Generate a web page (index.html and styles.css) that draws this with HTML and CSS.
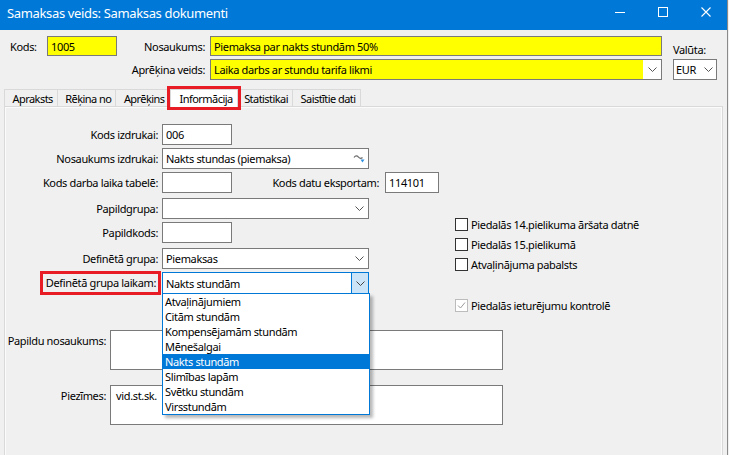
FILE: index.html
```html
<!DOCTYPE html>
<html lang="lv">
<head>
<meta charset="utf-8">
<title>Samaksas veids</title>
<link rel="stylesheet" href="styles.css">
</head>
<body>
<div class="window">
  <div class="titlebar">
    <span class="title">Samaksas veids: Samaksas dokumenti</span>
    <div class="ctrls">
      <span class="cbtn"><svg width="10" height="10" viewBox="0 0 10 10"><path d="M0 5.5H10" stroke="#fff" stroke-width="1"/></svg></span>
      <span class="cbtn"><svg width="10" height="10" viewBox="0 0 10 10"><rect x="0.5" y="0.5" width="9" height="9" fill="none" stroke="#fff" stroke-width="1"/></svg></span>
      <span class="cbtn"><svg width="10" height="10" viewBox="0 0 10 10"><path d="M0.5 0.5L9.5 9.5M9.5 0.5L0.5 9.5" stroke="#fff" stroke-width="1.1"/></svg></span>
    </div>
  </div>

  <div class="hdr">
    <span class="hlbl kods">Kods:</span>
    <div class="field yellow w-kods">1005</div>
    <span class="hlbl right">Nosaukums:</span>
    <div class="field yellow">Piemaksa par nakts stundām 50%</div>
    <span class="hlbl valuta">Valūta:</span>

    <span class="hlbl right r2">Aprēķina veids:</span>
    <div class="field combo r2">
      <span class="cval yellow">Laika darbs ar stundu tarifa likmi</span>
      <span class="carrow"><svg width="9" height="5" viewBox="0 0 9 5"><polyline points="0.5,0.5 4.5,4.5 8.5,0.5" fill="none" stroke="#555" stroke-width="1"/></svg></span>
    </div>
    <div class="field combo r2 eur">
      <span class="cval">EUR</span>
      <span class="carrow"><svg width="9" height="5" viewBox="0 0 9 5"><polyline points="0.5,0.5 4.5,4.5 8.5,0.5" fill="none" stroke="#555" stroke-width="1"/></svg></span>
    </div>
  </div>

  <div class="tabs">
    <span class="tab">Apraksts</span>
    <span class="tab">Rēķina no</span>
    <span class="tab">Aprēķins</span>
    <span class="tab active">Informācija</span>
    <span class="tab">Statistikai</span>
    <span class="tab">Saistītie dati</span>
  </div>

  <div class="panel">
    <div class="form-top">
      <div class="fields">
        <div class="row">
          <span class="lbl">Kods izdrukai:</span>
          <div class="field w-short">006</div>
        </div>
        <div class="row">
          <span class="lbl">Nosaukums izdrukai:</span>
          <div class="field w-long combo">
            <span class="cval">Nakts stundas (piemaksa)</span>
            <span class="carrow trans"><svg width="12" height="9" viewBox="0 0 12 9"><path d="M1 3.5C2.5 1.5 4 1.5 5.5 3.2S8.5 4.5 9.5 3.5" fill="none" stroke="#6b6b6b" stroke-width="1.2"/><path d="M7.5 5.5H11.5L9.5 8.5Z" fill="#2d8fe0"/></svg></span>
          </div>
        </div>
        <div class="row gap">
          <span class="lbl">Kods darba laika tabelē:</span>
          <div class="field w-short"></div>
          <span class="lbl2">Kods datu eksportam:</span>
          <div class="field w-exp">114101</div>
        </div>
        <div class="row">
          <span class="lbl">Papildgrupa:</span>
          <div class="field w-long combo">
            <span class="cval"></span>
            <span class="carrow trans"><svg width="9" height="5" viewBox="0 0 9 5"><polyline points="0.5,0.5 4.5,4.5 8.5,0.5" fill="none" stroke="#555" stroke-width="1"/></svg></span>
          </div>
        </div>
        <div class="row gap">
          <span class="lbl">Papildkods:</span>
          <div class="field w-short"></div>
        </div>
        <div class="row">
          <span class="lbl">Definētā grupa:</span>
          <div class="field w-long combo">
            <span class="cval">Piemaksas</span>
            <span class="carrow trans"><svg width="9" height="5" viewBox="0 0 9 5"><polyline points="0.5,0.5 4.5,4.5 8.5,0.5" fill="none" stroke="#555" stroke-width="1"/></svg></span>
          </div>
        </div>
        <div class="row open">
          <span class="lbl"><span class="mark">Definētā grupa laikam:</span></span>
          <div class="field w-long combo focus">
            <span class="cval">Nakts stundām</span>
            <span class="carrow pressed"><svg width="9" height="5" viewBox="0 0 9 5"><polyline points="0.5,0.5 4.5,4.5 8.5,0.5" fill="none" stroke="#444" stroke-width="1"/></svg></span>
          </div>
          <ul class="dropdown">
            <li>Atvaļinājumiem</li>
            <li>Citām stundām</li>
            <li>Kompensējamām stundām</li>
            <li>Mēnešalgai</li>
            <li class="sel">Nakts stundām</li>
            <li>Slimības lapām</li>
            <li>Svētku stundām</li>
            <li>Virsstundām</li>
          </ul>
        </div>
      </div>
      <div class="checks">
        <label class="chk"><span class="box"></span>Piedalās 14.pielikuma āršata datnē</label>
        <label class="chk"><span class="box"></span>Piedalās 15.pielikumā</label>
        <label class="chk"><span class="box"></span>Atvaļinājuma pabalsts</label>
        <label class="chk last"><span class="box dis"><svg width="11" height="11" viewBox="0 0 11 11"><polyline points="2,5.5 4.5,8 9,2.5" fill="none" stroke="#9a9a9a" stroke-width="1"/></svg></span>Piedalās ieturējumu kontrolē</label>
      </div>
    </div>

    <div class="trow">
      <span class="tlbl">Papildu nosaukums:</span>
      <div class="tarea"></div>
    </div>
    <div class="trow">
      <span class="tlbl">Piezīmes:</span>
      <div class="tarea">vid.st.sk.</div>
    </div>
  </div>
</div>
</body>
</html>
```
FILE: styles.css
```css
* { box-sizing: border-box; }
html, body { margin: 0; padding: 0; }
body {
  width: 729px;
  height: 455px;
  overflow: hidden;
  background: #f0f0f0;
  font-family: "Noto Sans", "Open Sans", sans-serif;
  font-size: 11px;
  letter-spacing: -0.35px;
  color: #000;
}
.window {
  width: 728px;
  height: 455px;
  border-right: 1px solid #8a8a8a;
  overflow: hidden;
}
.titlebar {
  height: 30px;
  background: #0078d7;
  color: #fff;
  display: flex;
  align-items: center;
  padding-left: 7px;
}
.title { flex: 1; font-size: 13px; letter-spacing: -0.35px; padding-bottom: 5px; }
.ctrls { display: flex; align-self: stretch; }
.cbtn {
  width: 43px;
  display: flex;
  align-items: center;
  justify-content: center;
  padding-bottom: 6px;
}

/* header */
.hdr {
  display: grid;
  grid-template-columns: 47px 70px 93px 452px 11px 44px;
  grid-template-rows: 20px 21px;
  row-gap: 3px;
  margin-top: 6px;
}
.hlbl { display: flex; align-items: center; white-space: nowrap; }
.hlbl.kods { padding-left: 10px; }
.hlbl.right { justify-content: flex-end; padding-right: 5px; grid-column: 3; }
.hlbl.valuta { grid-column: 6; align-items: flex-end; line-height: 12px; }
.r2 { grid-row: 2; }
.hdr .combo.r2 { grid-column: 4; }
.hdr .combo.eur { grid-column: 6; }

.field {
  border: 1px solid #7a7a7a;
  background: #fff;
  padding-left: 3px;
  display: flex;
  align-items: center;
  white-space: nowrap;
  height: 21px;
}
.hdr .field { height: 100%; }
.yellow { background: #ffff00; }
.combo { padding-left: 0; }
.cval { flex: 1; align-self: stretch; display: flex; align-items: center; padding-left: 3px; }
.carrow {
  width: 18px;
  align-self: stretch;
  display: flex;
  align-items: center;
  justify-content: center;
  background: #fff;
}
.carrow.trans { background: transparent; }
.eur .carrow { width: 16px; }
.eur .cval { padding-left: 2px; }

/* tabs */
.tabs {
  display: flex;
  align-items: flex-end;
  margin: 9px 0 0 4px;
  height: 17px;
  position: relative;
  z-index: 2;
}
.tab {
  height: 17px;
  border: 1px solid #d9d9d9;
  border-bottom: none;
  margin-right: -1px;
  padding: 0 4px 0 7.5px;
  display: flex;
  align-items: center;
  background: #f0f0f0;
  white-space: nowrap;
  letter-spacing: -0.55px;
}
.tab.active {
  height: 18px;
  margin: 0 -2px 0 1px;
  padding: 0 4px 0 9px;
  background: #fff;
  outline: 3px solid #e81c24;
  position: relative;
  z-index: 3;
  margin-bottom: -1px;
}

/* panel */
.panel {
  margin-left: 4px;
  width: 719px;
  height: 380px;
  border: 1px solid #d9d9d9;
  box-shadow: inset 0 0 0 1px #fbfbfb;
  background: #f0f0f0;
  padding-top: 17px;
}
.form-top { display: flex; align-items: flex-start; }
.fields { width: 450px; }
.row {
  display: flex;
  align-items: center;
  height: 21px;
  margin-bottom: 3px;
  white-space: nowrap;
}
.row.gap { margin-bottom: 5px; }
.lbl { width: 157px; text-align: right; padding-right: 4px; }
.lbl2 { width: 153px; text-align: right; padding-right: 6px; }
.w-kods { width: 70px; }
.w-short { width: 70px; }
.w-long { width: 207px; }
.w-exp { width: 54px; }

.row.open { position: relative; height: 22px; }
.mark {
  display: inline-block;
  padding: 1px 2px 2px 3px;
  outline: 3px solid #e81c24;
  background: #f0f0f0;
}
.combo.focus { border-color: #0078d7; height: 22px; }
.carrow.pressed {
  background: #cce4f7;
  border-left: 1px solid #0078d7;
  width: 17px;
}
.dropdown {
  position: absolute;
  left: 157px;
  top: 21px;
  width: 208px;
  height: 122px;
  margin: 0;
  padding: 0;
  list-style: none;
  background: #fff;
  border: 1px solid #0078d7;
  box-shadow: 3px 3px 3px rgba(0, 0, 0, 0.28);
  z-index: 5;
}
.dropdown li { height: 15px; line-height: 15px; padding-left: 2px; }
.dropdown li.sel { background: #0078d7; color: #fff; }

.checks { padding-top: 90px; }
.chk { display: flex; align-items: center; height: 20px; white-space: nowrap; }
.chk.last { margin-top: 21px; }
.box {
  width: 13px;
  height: 13px;
  border: 1px solid #333;
  background: #fff;
  margin-right: 3px;
  display: flex;
  align-items: center;
  justify-content: center;
}
.box.dis { border-color: #bcbcbc; }

.trow { display: flex; align-items: flex-start; margin-top: 15px; }
.tlbl { width: 105px; text-align: right; padding-right: 4px; padding-top: 3px; white-space: nowrap; }
.tarea {
  width: 393px;
  height: 40px;
  border: 1px solid #7a7a7a;
  background: #fff;
  padding: 2px 5px;
}
```
